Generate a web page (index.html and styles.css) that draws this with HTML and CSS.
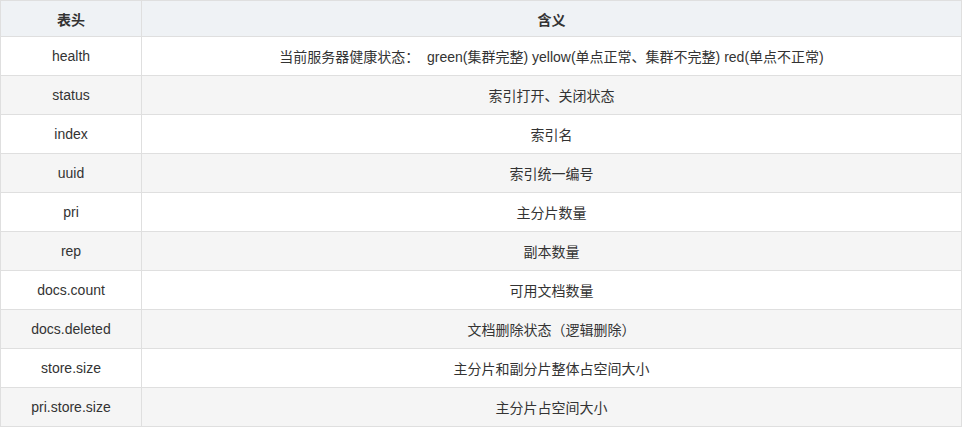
FILE: index.html
```html
<!DOCTYPE html>
<html lang="zh">
<head>
<meta charset="utf-8">
<title>表头</title>
<link rel="stylesheet" href="styles.css">
</head>
<body>
<table class="tbl">
  <thead>
    <tr><th class="c1">表头</th><th>含义</th></tr>
  </thead>
  <tbody>
    <tr><td>health</td><td>当前服务器健康状态：&nbsp; green(集群完整) yellow(单点正常、集群不完整) red(单点不正常)</td></tr>
    <tr><td>status</td><td>索引打开、关闭状态</td></tr>
    <tr><td>index</td><td>索引名</td></tr>
    <tr><td>uuid</td><td>索引统一编号</td></tr>
    <tr><td>pri</td><td>主分片数量</td></tr>
    <tr><td>rep</td><td>副本数量</td></tr>
    <tr><td>docs.count</td><td>可用文档数量</td></tr>
    <tr><td>docs.deleted</td><td>文档删除状态（逻辑删除）</td></tr>
    <tr><td>store.size</td><td>主分片和副分片整体占空间大小</td></tr>
    <tr><td>pri.store.size</td><td>主分片占空间大小</td></tr>
  </tbody>
</table>
</body>
</html>
```
FILE: styles.css
```css
html, body {
  margin: 0;
  padding: 0;
  background: #fff;
}
body {
  font-family: "Liberation Sans", Arial, "Noto Sans CJK SC", sans-serif;
  font-size: 14px;
  color: #333;
}
.tbl {
  border-collapse: collapse;
  width: 962px;
  table-layout: fixed;
}
.tbl th, .tbl td {
  border: 1px solid #dfdfdf;
  text-align: center;
  padding: 0 8px;
  white-space: nowrap;
}
.tbl th {
  background: #eff2f5;
  font-weight: bold;
  height: 35px;
}
.tbl td {
  height: 38px;
}
.tbl .c1 {
  width: 124px;
}
.tbl tbody tr:nth-child(even) td {
  background: #f5f5f5;
}
```
